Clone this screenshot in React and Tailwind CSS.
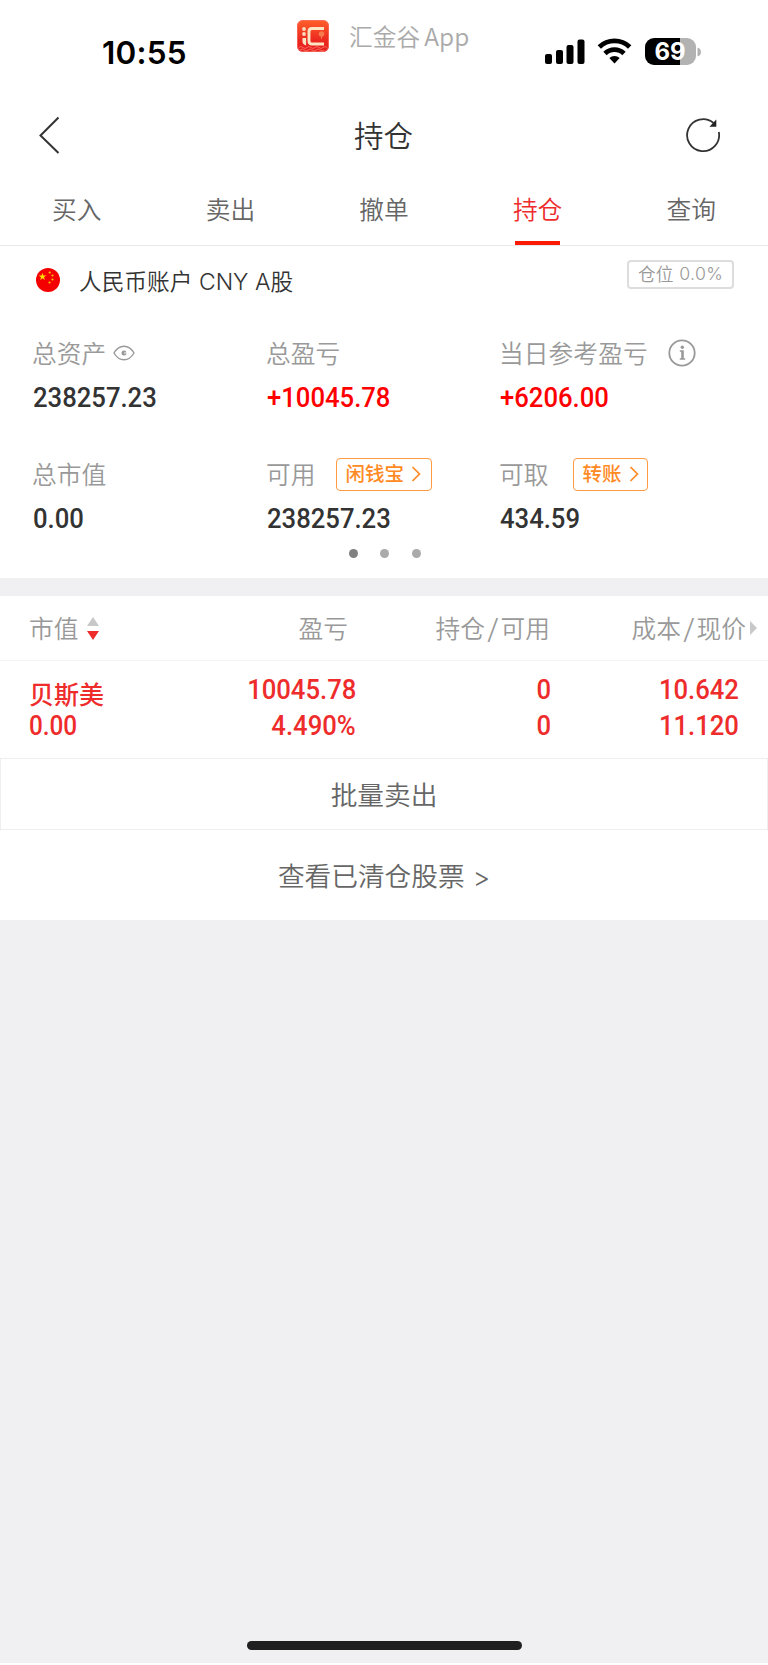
import React from 'react';

const tabs = ['买入', '卖出', '撤单', '持仓', '查询'];

function StatusBar() {
  return (
    <div className="flex h-[90px] items-start">
      <div className="w-[297px] pt-[33px] pl-[102px] font-[Inter] text-[31.500px] leading-[40px] font-semibold tracking-[0.2px] text-black">
        10:55
      </div>
      <svg className="mt-5 h-8 w-8 shrink-0" viewBox="0 0 32 32">
        <defs>
          <linearGradient id="logo" x1="0" y1="0" x2="0" y2="1">
            <stop offset="0" stopColor="#ff6029" />
            <stop offset="0.6" stopColor="#ec2a20" />
            <stop offset="1" stopColor="#e51a1d" />
          </linearGradient>
        </defs>
        <rect width="32" height="32" rx="6" fill="url(#logo)" />
        <rect x="0.5" y="0.5" width="31" height="31" rx="5.5" fill="none" stroke="#f87060" strokeWidth="0.8" />
        <path d="M27 8.500H15Q12 8.500 12 11.500V21Q12 24 15 24H27" fill="none" stroke="#fbe5c3" strokeWidth="2.900" />
        <circle cx="7" cy="9" r="1.900" fill="#fbdcbc" />
        <circle cx="7" cy="14" r="1.900" fill="#fbdcbc" />
        <path d="M5.500 18h3.600v7.500q-3.600-1.200-3.600-4z" fill="#fbe5c3" />
        <circle cx="24.500" cy="14" r="2.800" fill="#f67a4b" />
        <path d="M24.500 16v3" stroke="#f67a4b" strokeWidth="1" />
        <path d="M2 27.500q2-2 4 0t4 0 4 0 4 0 4 0 4 0 4 0M3 30q2-2 4 0t4 0 4 0 4 0 4 0 4 0" fill="none" stroke="#ff8a73" strokeWidth="0.700" />
      </svg>
      <div className="ml-5 w-[196px] pt-4 text-[23.700px] leading-[40px] whitespace-nowrap text-[#aaaaaa]">
        汇金谷 <span className="-ml-px text-[24.500px]">App</span>
      </div>
      <svg className="mt-[38px] h-7 w-[157px] shrink-0" viewBox="0 0 157 28">
        <rect x="0" y="16" width="7" height="10" rx="2" />
        <rect x="11" y="12" width="7" height="14" rx="2" />
        <rect x="21.500" y="7" width="7" height="19" rx="2" />
        <rect x="32.500" y="1.500" width="7" height="24.500" rx="2" />
        <g fill="none" stroke="#000" strokeWidth="4.800">
          <path d="M54.300 9A22 22 0 0 1 84.700 9" />
          <path d="M60 15.400A13.700 13.700 0 0 1 79 15.400" />
        </g>
        <path d="M69.500 25.500L64.300 20a8 8 0 0 1 10.400 0z" />
        <path d="M109 0h27v27h-27a9 9 0 0 1-9-9V9a9 9 0 0 1 9-9z" />
        <path d="M135 0h7a9 9 0 0 1 9 9v9a9 9 0 0 1-9 9h-7z" fill="#b2b2b2" />
        <path d="M152.500 9.500q3.500 1 3.500 4.500t-3.500 4.500z" fill="#b2b2b2" />
        <text x="125" y="22.300" textAnchor="middle" fontFamily="Inter" fontWeight="700" fontSize="24" fill="#fff">69</text>
      </svg>
    </div>
  );
}

function TitleBar() {
  return (
    <header className="flex h-[90px] items-center justify-between pr-[47px] pl-[38px]">
      <svg className="h-10 w-[38px]" viewBox="0 0 38 40" fill="none" stroke="#333" strokeWidth="2">
        <path d="M20.500 2.500L2.500 20.500L20.500 38" />
      </svg>
      <h1 className="mb-0.5 ml-1.5 text-[29.500px] text-[#333333]">持仓</h1>
      <svg className="h-10 w-9" viewBox="0 0 36 40" fill="none">
        <path d="M33.800 17A16 16 0 1 1 28.500 8" stroke="#333" strokeWidth="1.800" />
        <path d="M31.300 4.500V11.800H24.500z" fill="#222" />
      </svg>
    </header>
  );
}

function Num({ size = 'text-[28.500px]', className = '', children }) {
  return (
    <span className={`block w-max scale-x-[0.9] font-[Roboto] font-medium whitespace-nowrap ${size} ${className}`}>{children}</span>
  );
}

function Stat({ label, value, red, children }) {
  return (
    <div>
      <div className="flex h-9 items-center text-[24.700px] whitespace-nowrap text-[#999999]">
        <span className="-ml-px tracking-[0.1px]">{label}</span>
        {children}
      </div>
      <div className="mt-[9px] flex h-[37px] items-center">
        <Num className={`origin-left ${red ? 'text-[#ff0000]' : 'text-[#333333]'}`}>{value}</Num>
      </div>
    </div>
  );
}

function LinkTag({ className, children }) {
  return (
    <span className={`flex h-[33px] items-center rounded border border-[#ff9a44] pl-[9px] text-[19.500px] font-medium text-[#ff8a24] ${className}`}>
      <span className="-mt-0.5">{children}</span>
      <svg className="ml-[7px] h-4 w-[10px]" viewBox="0 0 10 16" fill="none" stroke="#ff8a24" strokeWidth="1.700">
        <path d="M1.500 1L8.500 8L1.500 15" />
      </svg>
    </span>
  );
}

function Account() {
  return (
    <section className="h-[332px] bg-white">
      <div className="flex h-[68px] items-center pr-[34px] pl-9">
        <svg className="h-6 w-6" viewBox="0 0 24 24">
          <circle cx="12" cy="12" r="12" fill="#f40000" />
          <path d="M6.500 4.800l.9 2.700h2.800l-2.200 1.700.8 2.700-2.300-1.600-2.300 1.600.8-2.700-2.200-1.700h2.800z" fill="#ffe100" />
          <g fill="#f5c400">
            <circle cx="13.700" cy="4.500" r="1.100" />
            <circle cx="16.500" cy="7.500" r="1.100" />
            <circle cx="16.500" cy="11.500" r="1.100" />
            <circle cx="13.500" cy="14.500" r="1.100" />
          </g>
        </svg>
        <span className="mt-1 ml-[19px] text-[22.700px] text-[#333333]">
          人民币账户<span className="font-[Inter] text-[23px] font-light"> CNY A</span>股
        </span>
        <span className="-mt-3 ml-auto flex h-[29px] w-[107px] items-center justify-center rounded border-2 border-[#dddddd] text-[17.700px] text-[#999999]">
          <span className="-mt-px">仓位</span>
          <span className="ml-1.5 font-[Inter] text-[17.700px] tracking-[0.3px]">0.0%</span>
        </span>
      </div>
      <div className="grid grid-cols-[234px_233px_1fr] gap-y-[39px] pt-[21px] pl-[33px]">
        <Stat label="总资产" value="238257.23">
          <svg className="ml-[7px] h-4 w-[22px]" viewBox="0 0 22 16" fill="none" stroke="#999" strokeWidth="1.400">
            <path d="M1 8Q5 1.200 11 1.200T21 8Q17 14.800 11 14.800T1 8z" />
            <circle cx="11" cy="8" r="2.500" fill="#999" stroke="none" />
            <path d="M11 8h3V5.500" stroke="#fff" strokeWidth="0.900" />
          </svg>
        </Stat>
        <Stat label="总盈亏" value="+10045.78" red />
        <Stat label="当日参考盈亏" value="+6206.00" red>
          <svg className="ml-5 h-7 w-7" viewBox="0 0 28 28">
            <circle cx="14" cy="14" r="12.700" fill="none" stroke="#999" strokeWidth="1.800" />
            <circle cx="14.300" cy="8.200" r="1.700" fill="#999" />
            <path d="M11.800 11.300h4v8h1.400v1.500h-5.400v-1.500h1.400v-6.500h-1.400z" fill="#999" />
          </svg>
        </Stat>
        <Stat label="总市值" value="0.00" />
        <Stat label="可用" value="238257.23">
          <LinkTag className="ml-5 w-24">闲钱宝</LinkTag>
        </Stat>
        <Stat label="可取" value="434.59">
          <LinkTag className="ml-6 w-[75px]">转账</LinkTag>
        </Stat>
      </div>
      <div className="mt-[11px] ml-px flex justify-center gap-[22.500px]">
        <i className="h-[9px] w-[9px] rounded-full bg-[#808080]" />
        <i className="h-[9px] w-[9px] rounded-full bg-[#aaaaaa]" />
        <i className="h-[9px] w-[9px] rounded-full bg-[#aaaaaa]" />
      </div>
    </section>
  );
}

function Holdings() {
  return (
    <section className="mt-[18px] bg-white">
      <div className="flex h-[65px] items-center border-b border-[#f3f3f3] pl-[29px] text-[24.700px] whitespace-nowrap text-[#999999]">
        <div className="flex w-[120px] items-center">
          市值
          <svg className="ml-[9px] h-6 w-3" viewBox="0 0 12 24">
            <path d="M6 1l6 9H0z" fill="#c8c8c8" />
            <path d="M0 15h12l-6 9z" fill="#ee2c2c" />
          </svg>
        </div>
        <div className="w-[199px] text-right">盈亏</div>
        <div className="flex w-[202px] justify-end">
          持仓<span className="mx-[3px] inline-block scale-x-[1.15]">/</span>可用
        </div>
        <div className="flex w-[196px] justify-end">
          成本<span className="mx-[3px] inline-block scale-x-[1.15]">/</span>现价
        </div>
        <svg className="ml-1 h-[14px] w-[7px]" viewBox="0 0 7 14">
          <path d="M0 0l7 7-7 7z" fill="#c8c8c8" />
        </svg>
      </div>
      <div className="flex h-[97px] pr-[29px] pl-[29px] text-[#ee2c2c]">
        <div className="w-[120px] pt-3.5">
          <div className="h-9 text-[25px] leading-9 font-medium whitespace-nowrap">贝斯美</div>
          <Num size="text-[27px]" className="origin-left leading-[31px]">0.00</Num>
        </div>
        <div className="flex w-[207px] flex-col items-end pt-[11px] leading-9">
          <Num className="origin-right">10045.78</Num>
          <Num className="origin-right">4.490%</Num>
        </div>
        <div className="flex w-[195px] flex-col items-end pt-[11px] leading-9">
          <Num className="origin-right">0</Num>
          <Num className="origin-right">0</Num>
        </div>
        <div className="flex flex-1 flex-col items-end pt-[11px] leading-9">
          <Num className="origin-right">10.642</Num>
          <Num className="origin-right">11.120</Num>
        </div>
      </div>
      <div className="flex h-[72px] items-center justify-center border border-[#eeeeee] text-[26.700px] text-[#666666]">批量卖出</div>
      <div className="flex h-[90px] items-center justify-center text-[26.700px] text-[#666666]">
        查看已清仓股票<span className="mt-1 ml-2 font-[Inter]">&gt;</span>
      </div>
    </section>
  );
}

export default function App() {
  return (
    <div className="flex h-[1665px] w-[768px] flex-col overflow-hidden bg-[#f0f0f2] font-['Noto_Sans_CJK_SC',sans-serif] font-[350]">
      <div className="bg-white">
        <StatusBar />
        <TitleBar />
        <nav className="grid h-[66px] grid-cols-5 border-b border-[#e8e8e8]">
          {tabs.map((tab) => (
            <div key={tab} className={`flex flex-col items-center text-[24.700px] ${tab === '持仓' ? 'text-[#ee2c2c]' : 'text-[#666666]'}`}>
              <span className="mt-2.5 leading-9">{tab}</span>
              {tab === '持仓' && <span className="mt-auto h-1 w-[45px] bg-[#fb1a04]" />}
            </div>
          ))}
        </nav>
      </div>
      <Account />
      <Holdings />
      <div className="mt-auto flex h-6 items-start justify-center border-b-2 border-white">
        <div className="h-[9px] w-[275px] rounded-full bg-[#202020]" />
      </div>
    </div>
  );
}
